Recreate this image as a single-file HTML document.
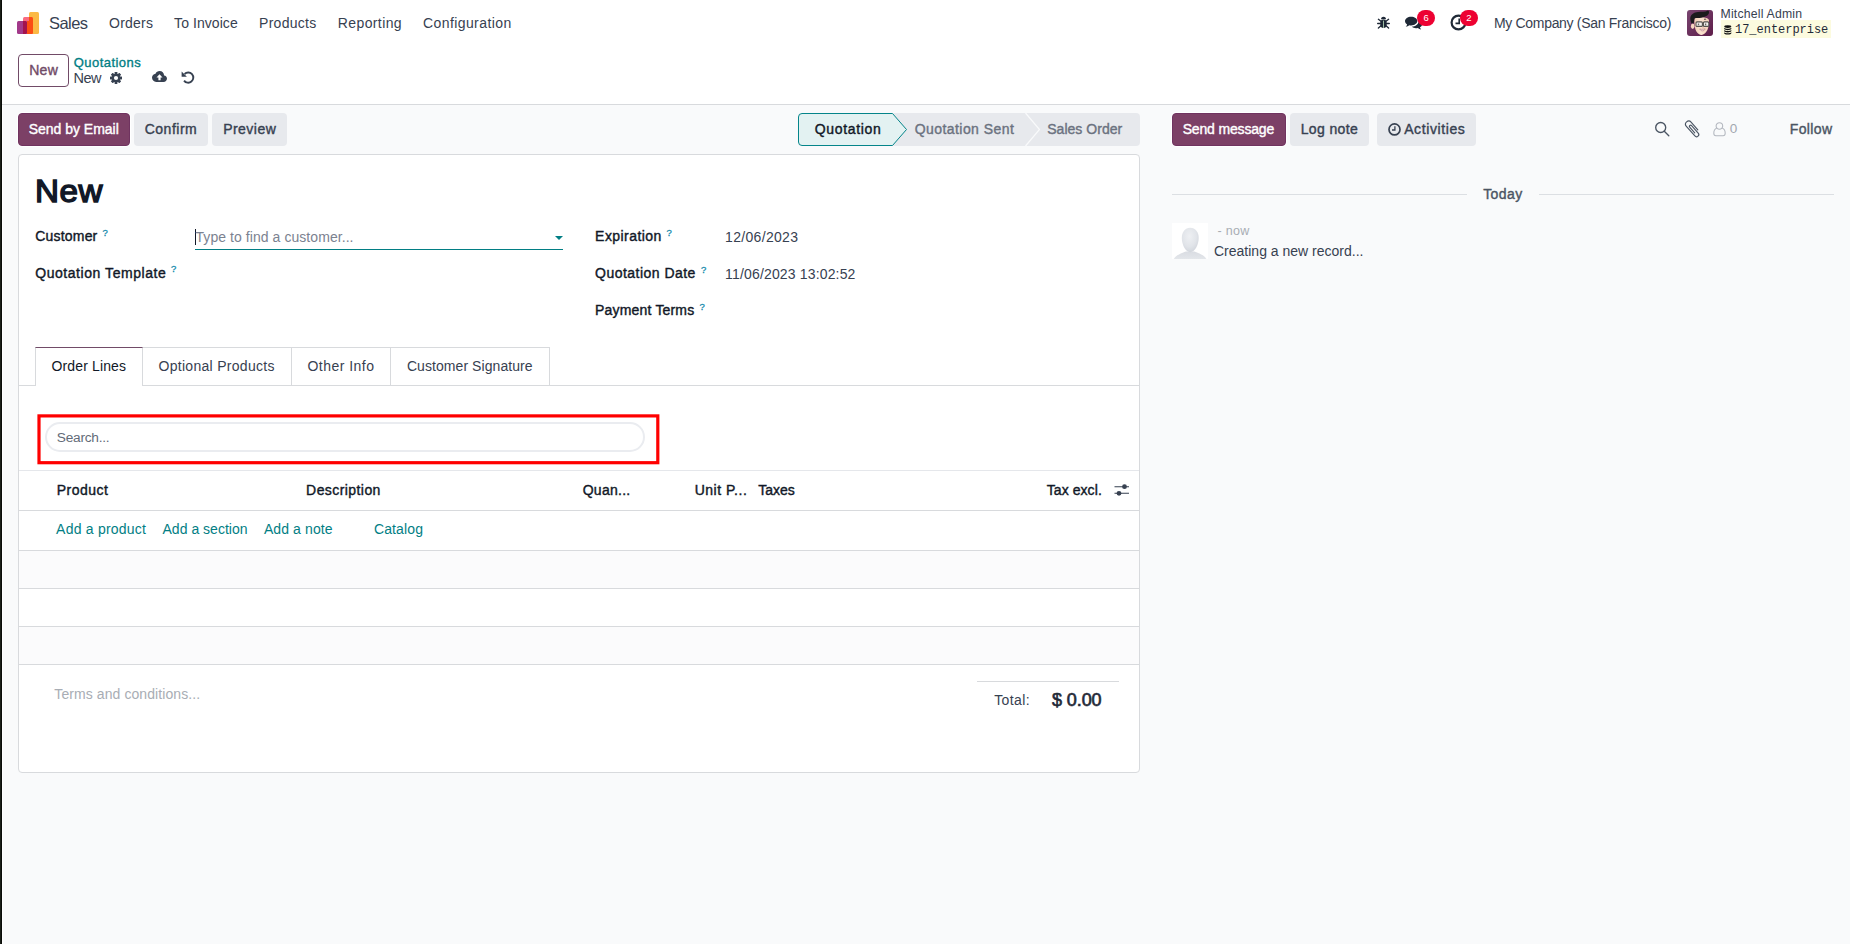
<!DOCTYPE html>
<html lang="en">
<head>
<meta charset="utf-8">
<title>Odoo - New Quotation</title>
<style>
html,body{margin:0;padding:0;}
body{width:1850px;height:944px;position:relative;overflow:hidden;background:#f9fafb;font-family:"Liberation Sans",sans-serif;font-size:14px;color:#374151;}
.a{position:absolute;}
.t{position:absolute;white-space:nowrap;line-height:20px;height:20px;}
svg{position:absolute;overflow:visible;}
.btn{position:absolute;border-radius:4px;box-sizing:border-box;}
.sec{background:#e7e9ed;}
.pri{background:#7c4066;border:1px solid #703360;box-shadow:0 0 0 1px rgba(255,255,255,.9);}
.hl{position:absolute;height:1px;background:#d8dadd;}
.vl{position:absolute;width:1px;background:#d8dadd;}
</style>
</head>
<body>

<!-- window edge -->
<div class="a" style="left:0;top:0;width:1px;height:944px;background:#1b1f18"></div>
<div class="a" style="left:1px;top:0;width:1px;height:944px;background:#0a0c08"></div>
<div class="a" style="left:2px;top:105px;width:1px;height:839px;background:#fff"></div>
<!-- top white area: navbar + control panel -->
<div class="a" style="left:2px;top:0;width:1848px;height:104px;background:#fff"></div>
<div class="hl" style="left:2px;top:104px;width:1848px;background:#d8dadd"></div>

<!-- app logo -->
<svg style="left:17px;top:12px" width="22" height="22" viewBox="0 0 22 22">
  <rect x="12" y="0" width="10" height="22" rx="1.5" fill="#fbb945"/>
  <rect x="6" y="5" width="10" height="17" rx="1.5" fill="#f96b7f"/>
  <path d="M12 5h2.5a1.5 1.5 0 0 1 1.5 1.5v14a1.5 1.5 0 0 1-1.5 1.5H12z" fill="#fb4d14"/>
  <rect x="0" y="9" width="10" height="13" rx="1.5" fill="#a2398a"/>
  <path d="M6 9h2.5a1.5 1.5 0 0 1 1.5 1.5v10a1.5 1.5 0 0 1-1.5 1.5H6z" fill="#a3134e"/>
  <rect x="10" y="9" width="2" height="13" fill="#fb4d14"/>
</svg>

<!-- systray: bug -->
<svg style="left:1377px;top:16px" width="13" height="13" viewBox="0 0 13 13" fill="none" stroke="#1f2937" stroke-width="1.35" stroke-linecap="round">
  <ellipse cx="6.5" cy="7.7" rx="3.3" ry="4.3" fill="#1f2937" stroke="none"/>
  <path d="M4 3.300a2.500 2.500 0 0 1 5 0z" fill="#1f2937" stroke="none"/>
  <path d="M0.700 7.500h3M9.300 7.500h3M1.400 3.300l2.600 2M11.600 3.300l-2.600 2M1.400 12l2.600-2.200M11.600 12l-2.600-2.200"/>
  <path d="M6.500 5v6.500" stroke="#bfe3c0" stroke-width="0.800"/>
</svg>
<!-- systray: comments -->
<svg style="left:1404.800px;top:16.200px" width="17.400" height="14.200" viewBox="0 0 17 12.500">
  <path d="M6 0C2.7 0 0 1.9 0 4.3c0 1.3.8 2.5 2.1 3.3-.2.8-.7 1.500-1.400 2.100 1.300-.1 2.600-.6 3.500-1.400.6.1 1.200.2 1.800.2 3.300 0 6-1.900 6-4.300S9.300 0 6 0z" fill="#1f2937"/>
  <path d="M13.200 4.800c0 2.700-2.900 4.900-6.600 5.100 1 .9 2.500 1.400 4.100 1.400.6 0 1.200-.1 1.800-.2.900.8 2.100 1.300 3.500 1.400-.7-.6-1.200-1.300-1.400-2.100 1.400-.8 2.200-2 2.200-3.300 0-1.700-1.500-3.200-3.700-3.900.1.500.1 1.100.1 1.600z" fill="#1f2937"/>
</svg>
<div class="a" style="left:1417px;top:10px;width:18px;height:16px;border-radius:9px;background:#ed0232"></div>
<!-- systray: clock -->
<svg style="left:1450px;top:14px" width="17" height="17" viewBox="0 0 17 17" fill="none" stroke="#1f2937">
  <circle cx="8.500" cy="8.500" r="6.900" stroke-width="2.200"/>
  <path d="M9.200 4.500v4.900H5.500" stroke-width="1.600"/>
</svg>
<div class="a" style="left:1460px;top:10px;width:18px;height:16px;border-radius:9px;background:#ed0232"></div>

<!-- user avatar -->
<svg style="left:1687px;top:10px" width="26" height="26" viewBox="0 0 26 26">
  <defs>
    <clipPath id="avc"><rect width="26" height="26" rx="3"/></clipPath>
    <linearGradient id="avbg" x1="0" y1="0" x2="1" y2="1"><stop offset="0" stop-color="#784570"/><stop offset="1" stop-color="#5e1d4a"/></linearGradient>
    <linearGradient id="avface" x1="0" y1="0" x2="1" y2="0"><stop offset="0" stop-color="#f1cdb4"/><stop offset=".45" stop-color="#fbe3d0"/><stop offset="1" stop-color="#f3cfb6"/></linearGradient>
  </defs>
  <g clip-path="url(#avc)">
    <rect width="26" height="26" fill="url(#avbg)"/>
    <ellipse cx="5.700" cy="16.200" rx="1.800" ry="2.800" fill="#f6d6c0"/>
    <path d="M7.300 9.500C7 6.500 22 6 22 10.500c.2 4.500-.8 9-3 11.800-1.600 2-3.300 2.700-4.600 2.700-1.600 0-3.600-1.200-5-3.400C7.800 19 7.400 14 7.300 9.500z" fill="url(#avface)"/>
    <path d="M4.600 13.600C3.600 11.500 3 9.300 3.400 7.300 4 4.300 7 2.300 11 2c3.500-.3 7 .3 10-1.400.7.300 1.200 1 1.100 1.800-.3 1.600-1.300 2.800-2.800 3.700-2 1.200-4.500 1.700-7 1.900-1.700.1-3.400-.1-4.700.2-.5 1.800-.6 3.600-.9 5.300-.6-.4-1.500-.3-2.100.1z" fill="#1b1b1d"/>
    <path d="M17 9.400c.7-.4 1.500-.4 2.100 0" stroke="#2a2422" stroke-width=".8" fill="none"/>
    <rect x="9" y="11.900" width="6.400" height="4.500" rx="1" fill="#f2efec" stroke="#55534f" stroke-width="1.100"/>
    <rect x="16.400" y="11.900" width="5.400" height="4.500" rx="1" fill="#f2efec" stroke="#55534f" stroke-width="1.100"/>
    <path d="M11.500 13.500v1.800M18.600 13.500v1.800" stroke="#6b6763" stroke-width="1.300"/>
    <path d="M15.200 17.700c.5.300 1.100.3 1.600 0" stroke="#eaa79a" stroke-width=".8" fill="none"/>
    <path d="M12.800 18.900c1.600.6 3.700.6 5.300-.1-.3 1.300-1.300 2-2.600 2-1.400 0-2.300-.7-2.700-1.900z" fill="#fff" stroke="#a8626a" stroke-width=".6"/>
  </g>
</svg>
<!-- db name bg -->
<div class="a" style="left:1721px;top:20px;width:110px;height:18px;background:#fcfbdf"></div>
<svg style="left:1723.500px;top:24.500px" width="7.500" height="9.500" viewBox="0 0 8 10" fill="#111">
  <ellipse cx="4" cy="1.600" rx="3.800" ry="1.500"/>
  <path d="M.2 2.800c.6.800 2 1.200 3.800 1.200s3.200-.4 3.800-1.200v1.500c-.6.800-2 1.200-3.800 1.200S.8 5.100.2 4.300z"/>
  <path d="M.2 5.200c.6.800 2 1.200 3.800 1.200s3.200-.4 3.800-1.200v1.500c-.6.800-2 1.200-3.800 1.200S.8 7.500.2 6.700z"/>
  <path d="M.2 7.600c.6.800 2 1.200 3.800 1.200s3.200-.4 3.800-1.200v1c0 .8-1.700 1.400-3.800 1.400S.2 9.400.2 8.600z"/>
</svg>

<!-- control panel -->
<div class="btn" style="left:18px;top:54px;width:51px;height:33px;border:1px solid #714b67;background:#fff"></div>
<!-- gear -->
<svg style="left:110px;top:72px" width="12" height="12" viewBox="0 0 12 12">
  <g fill="#374151">
    <circle cx="6" cy="6" r="4.350"/>
    <rect x="4.600" y="0" width="2.800" height="12" rx=".4"/><rect x="4.600" y="0" width="2.800" height="12" rx=".4" transform="rotate(45 6 6)"/><rect x="4.600" y="0" width="2.800" height="12" rx=".4" transform="rotate(90 6 6)"/><rect x="4.600" y="0" width="2.800" height="12" rx=".4" transform="rotate(135 6 6)"/>
  </g>
  <circle cx="6" cy="6" r="2.100" fill="#fff"/>
</svg>
<!-- cloud upload -->
<svg style="left:152px;top:71px" width="15" height="11" viewBox="0 0 15 11">
  <path d="M12.100 4.500C12.100 2 10.100 0 7.600 0 5.800 0 4.200 1.100 3.500 2.700 1.500 2.900 0 4.600 0 6.600 0 9 1.800 11 4.200 11h7.300c1.900 0 3.500-1.500 3.500-3.400 0-1.600-1.200-2.900-2.900-3.100z" fill="#374151"/>
  <path d="M7.500 3.200l3 3.300H8.600v2.700H6.400V6.500H4.500z" fill="#fff"/>
</svg>
<!-- undo -->
<svg style="left:181px;top:70.500px" width="14" height="13" viewBox="0 0 14 13" fill="none">
  <path d="M3.600 3A5.100 5.100 0 1 1 3.070 9.600" stroke="#374151" stroke-width="1.900" stroke-linecap="butt"/>
  <path d="M.6 .5V5.800H5.900z" fill="#374151"/>
</svg>

<!-- action buttons -->
<div class="btn pri" style="left:18px;top:113px;width:112px;height:33px"></div>
<div class="btn sec" style="left:134px;top:113px;width:74px;height:33px"></div>
<div class="btn sec" style="left:212px;top:113px;width:75px;height:33px"></div>

<!-- status bar -->
<svg style="left:798px;top:113px" width="342" height="33" viewBox="0 0 342 33">
  <path d="M4 0H338a4 4 0 0 1 4 4V29a4 4 0 0 1-4 4H4z" fill="#e7e9ed"/>
  <path d="M4 .5H94.500L108.500 16.500 94.500 32.500H4A3.500 3.500 0 0 1 .5 29V4A3.500 3.500 0 0 1 4 .5z" fill="#e3f2f2" stroke="#04858a" stroke-width="1"/>
  <path d="M227.500 0L241.500 16.500 227.500 33" fill="none" stroke="#f9fafb" stroke-width="1.200"/>
</svg>

<!-- chatter buttons -->
<div class="btn pri" style="left:1172px;top:113px;width:114px;height:33px"></div>
<div class="btn sec" style="left:1290px;top:113px;width:79px;height:33px"></div>
<div class="btn sec" style="left:1377px;top:113px;width:99px;height:33px"></div>
<svg style="left:1387.800px;top:122.500px" width="13" height="13" viewBox="0 0 13 13" fill="none" stroke="#374151">
  <circle cx="6.500" cy="6.400" r="5.500" stroke-width="1.700"/><path d="M6.900 3.200v3.800H4" stroke-width="1.300"/>
</svg>
<!-- search icon -->
<svg style="left:1654px;top:121px" width="16" height="16" viewBox="0 0 16 16" fill="none" stroke="#4b5563" stroke-width="1.350">
  <circle cx="6.700" cy="6.500" r="5"/><path d="M10.300 10.200L14.800 14.700" stroke-linecap="round"/>
</svg>
<!-- paperclip -->
<svg style="left:1684px;top:120px" width="17" height="17" viewBox="0 0 17 17" fill="none" stroke="#4b5563" stroke-width="1.150" stroke-linecap="round" stroke-linejoin="round">
  <g transform="translate(3.300 2.400) rotate(48.500)">
    <path d="M12.500 -3L2.300 -3A3.150 3.150 0 0 0 2.300 3.300L15.200 3.300A2.200 2.200 0 0 0 15.200 -1.100L5.200 -1.100A1.250 1.250 0 0 0 5.200 1.400L12.800 1.400"/>
  </g>
</svg>
<!-- user-o -->
<svg style="left:1713px;top:121.500px" width="13" height="15" viewBox="0 0 13 15" fill="none" stroke="#b3b7bf" stroke-width="1.050">
  <circle cx="6.400" cy="4" r="3.300"/>
  <path d="M3.700 6.300C1.700 7 .8 8.800 .8 11.300c0 1.500.8 2.500 2.100 2.500h7.200c1.300 0 2.100-1 2.100-2.500 0-2.500-.9-4.300-2.900-5"/>
</svg>
<!-- Today separator -->
<div class="hl" style="left:1172px;top:194px;width:295px;background:#dcdfe3"></div>
<div class="hl" style="left:1539px;top:194px;width:295px;background:#dcdfe3"></div>
<!-- message avatar -->
<svg style="left:1172px;top:223px" width="36" height="36" viewBox="0 0 36 36">
  <defs>
    <radialGradient id="sil" cx=".45" cy=".35" r=".7"><stop offset="0" stop-color="#eef0f3"/><stop offset=".6" stop-color="#e1e4e9"/><stop offset="1" stop-color="#cfd3da"/></radialGradient>
    <linearGradient id="sil2" x1="0" y1="0" x2="0" y2="1"><stop offset="0" stop-color="#d9dce2"/><stop offset="1" stop-color="#e3e6ea"/></linearGradient>
    <clipPath id="mvc"><rect width="36" height="36"/></clipPath>
  </defs>
  <rect width="36" height="36" fill="#fff"/>
  <g clip-path="url(#mvc)">
  <path d="M1.800 36c2-3.500 7-6 12-7.600h8.600c5 1.600 10 4.100 12 7.600z" fill="url(#sil2)"/>
  <path d="M18.200 4.800c5.200 0 8.500 4.400 8.500 10.200 0 6.800-4 14.200-8.500 14.200S9.800 21.800 9.800 15c0-5.800 3.200-10.200 8.400-10.200z" fill="url(#sil)"/>
  </g>
</svg>

<!-- form sheet -->
<div class="a" style="left:18px;top:154px;width:1122px;height:619px;box-sizing:border-box;background:#fff;border:1px solid #d8dadd;border-radius:4px"></div>
<!-- customer input underline + caret -->
<div class="a" style="left:195px;top:248.800px;width:368px;height:1.100px;background:#017e84"></div>
<div class="a" style="left:195px;top:229px;width:1px;height:16px;background:#111827"></div>
<svg style="left:555px;top:236px" width="8" height="4" viewBox="0 0 8 4"><path d="M0 0h8L4 4z" fill="#017e84"/></svg>

<!-- notebook tabs -->
<div class="hl" style="left:19px;top:385px;width:1120px"></div>
<div class="a" style="left:35px;top:347px;width:108px;height:39px;box-sizing:border-box;background:#fff;border:1px solid #d8dadd;border-bottom:none;border-top:1px solid #714b67"></div>
<div class="hl" style="left:143px;top:347px;width:407px"></div>
<div class="vl" style="left:291px;top:347px;height:38px"></div>
<div class="vl" style="left:390px;top:347px;height:38px"></div>
<div class="vl" style="left:549px;top:347px;height:38px"></div>

<!-- red highlight + search -->
<svg style="left:0;top:0" width="700" height="470" viewBox="0 0 700 470"><rect x="39" y="415.900" width="618.800" height="46.800" fill="none" stroke="#ff0000" stroke-width="3.200"/></svg>
<div class="a" style="left:45px;top:422px;width:600px;height:30px;box-sizing:border-box;border:2px solid #eaecf0;border-radius:15px;background:#fff"></div>

<!-- table -->
<div class="hl" style="left:19px;top:470px;width:1120px;background:#e5e7eb"></div>
<div class="hl" style="left:19px;top:510px;width:1120px"></div>
<div class="hl" style="left:19px;top:550px;width:1120px"></div>
<div class="a" style="left:19px;top:551px;width:1120px;height:37px;background:#fbfbfc"></div>
<div class="hl" style="left:19px;top:588px;width:1120px"></div>
<div class="hl" style="left:19px;top:626px;width:1120px"></div>
<div class="a" style="left:19px;top:627px;width:1120px;height:37px;background:#fbfbfc"></div>
<div class="hl" style="left:19px;top:664px;width:1120px"></div>
<!-- sliders icon -->
<svg style="left:1114px;top:483px" width="16" height="14" viewBox="0 0 16 14">
  <path d="M.5 3.700h14.500M.5 10.300h14.500" stroke="#374151" stroke-width="1.100" fill="none"/>
  <circle cx="10.500" cy="3.700" r="2.400" fill="#374151"/><circle cx="5" cy="10.300" r="2.400" fill="#374151"/>
</svg>
<!-- total line -->
<div class="hl" style="left:977px;top:681px;width:142px"></div>

<!-- text -->
<span class="t" id="sales" style="left:49.00px;top:13.28px;font-size:16.50px;color:#374151;letter-spacing:-0.551px;">Sales</span>
<span class="t" id="m1" style="left:109.00px;top:12.65px;font-size:14.00px;color:#374151;letter-spacing:0.239px;">Orders</span>
<span class="t" id="m2" style="left:174.10px;top:12.65px;font-size:14.00px;color:#374151;letter-spacing:0.060px;">To Invoice</span>
<span class="t" id="m3" style="left:259.10px;top:12.65px;font-size:14.00px;color:#374151;letter-spacing:0.263px;">Products</span>
<span class="t" id="m4" style="left:337.80px;top:12.65px;font-size:14.00px;color:#374151;letter-spacing:0.386px;">Reporting</span>
<span class="t" id="m5" style="left:423.00px;top:12.65px;font-size:14.00px;color:#374151;letter-spacing:0.409px;">Configuration</span>
<span class="t" id="company" style="left:1493.90px;top:12.55px;font-size:14.00px;color:#374151;letter-spacing:-0.307px;">My Company (San Francisco)</span>
<span class="t" id="uname" style="left:1720.50px;top:3.75px;font-size:12.25px;color:#374151;letter-spacing:0.203px;">Mitchell Admin</span>
<span class="t" id="db" style="left:1735.00px;top:20.30px;font-size:12.00px;color:#1f2937;font-family:'Liberation Mono', monospace;letter-spacing:-0.025px;">17_enterprise</span>
<span class="t" id="b6" style="left:1423.50px;top:8.01px;font-size:9.50px;color:#fff;">6</span>
<span class="t" id="b2" style="left:1466.30px;top:8.01px;font-size:9.50px;color:#fff;">2</span>
<span class="t" id="newbtn" style="left:29.20px;top:60.15px;font-size:14.00px;color:#714b67;-webkit-text-stroke:0.39px currentColor;letter-spacing:0.291px;">New</span>
<span class="t" id="bc1" style="left:73.68px;top:53.09px;font-size:13.00px;color:#017e84;-webkit-text-stroke:0.36px currentColor;letter-spacing:0.468px;">Quotations</span>
<span class="t" id="bc2" style="left:73.50px;top:67.97px;font-size:14.50px;color:#374151;letter-spacing:-0.504px;">New</span>
<span class="t" id="sbe" style="left:28.70px;top:119.15px;font-size:14.00px;color:#fff;-webkit-text-stroke:0.39px currentColor;letter-spacing:-0.015px;">Send by Email</span>
<span class="t" id="conf" style="left:144.70px;top:119.15px;font-size:14.00px;color:#374151;-webkit-text-stroke:0.39px currentColor;letter-spacing:0.514px;">Confirm</span>
<span class="t" id="prev" style="left:223.20px;top:119.15px;font-size:14.00px;color:#374151;-webkit-text-stroke:0.39px currentColor;letter-spacing:0.467px;">Preview</span>
<span class="t" id="st1" style="left:814.70px;top:119.15px;font-size:14.00px;color:#111827;-webkit-text-stroke:0.39px currentColor;letter-spacing:0.672px;">Quotation</span>
<span class="t" id="st2" style="left:914.70px;top:119.15px;font-size:14.00px;color:#6b7280;-webkit-text-stroke:0.39px currentColor;letter-spacing:0.438px;">Quotation Sent</span>
<span class="t" id="st3" style="left:1047.20px;top:119.15px;font-size:14.00px;color:#6b7280;-webkit-text-stroke:0.39px currentColor;letter-spacing:0.039px;">Sales Order</span>
<span class="t" id="sm" style="left:1182.70px;top:119.15px;font-size:14.00px;color:#fff;-webkit-text-stroke:0.39px currentColor;letter-spacing:-0.164px;">Send message</span>
<span class="t" id="ln" style="left:1300.70px;top:119.15px;font-size:14.00px;color:#374151;-webkit-text-stroke:0.39px currentColor;letter-spacing:0.371px;">Log note</span>
<span class="t" id="act" style="left:1404.20px;top:119.15px;font-size:14.00px;color:#374151;-webkit-text-stroke:0.39px currentColor;letter-spacing:0.596px;">Activities</span>
<span class="t" id="fol0" style="left:1729.80px;top:119.02px;font-size:13.50px;color:#a3a7b0;">0</span>
<span class="t" id="follow" style="left:1789.70px;top:119.15px;font-size:14.00px;color:#4b5563;-webkit-text-stroke:0.39px currentColor;letter-spacing:0.406px;">Follow</span>
<span class="t" id="today" style="left:1483.20px;top:184.15px;font-size:14.00px;color:#4b5563;-webkit-text-stroke:0.39px currentColor;letter-spacing:0.435px;">Today</span>
<span class="t" id="now" style="left:1217.50px;top:220.67px;font-size:12.50px;color:#a8adb4;letter-spacing:0.315px;">- now</span>
<span class="t" id="creating" style="left:1214.00px;top:240.75px;font-size:14.00px;color:#374151;letter-spacing:0.004px;">Creating a new record...</span>
<span class="t" id="title" style="left:34.80px;top:181.85px;font-size:31.00px;color:#111827;-webkit-text-stroke:1.40px currentColor;letter-spacing:0.566px;transform-origin:0 50%;transform:scaleX(1.07);">New</span>
<span class="t" id="l1" style="left:35.20px;top:226.15px;font-size:14.00px;color:#111827;-webkit-text-stroke:0.39px currentColor;letter-spacing:0.201px;">Customer</span>
<span class="t" id="q1" style="left:102.43px;top:222.81px;font-size:9.50px;color:#1289ab;-webkit-text-stroke:0.27px currentColor;">?</span>
<span class="t" id="ph" style="left:195.50px;top:226.75px;font-size:14.00px;color:#7b8290;letter-spacing:0.063px;">Type to find a customer...</span>
<span class="t" id="l2" style="left:35.20px;top:262.75px;font-size:14.00px;color:#111827;-webkit-text-stroke:0.39px currentColor;letter-spacing:0.555px;">Quotation Template</span>
<span class="t" id="q2" style="left:170.93px;top:259.41px;font-size:9.50px;color:#1289ab;-webkit-text-stroke:0.27px currentColor;">?</span>
<span class="t" id="l3" style="left:595.10px;top:226.15px;font-size:14.00px;color:#111827;-webkit-text-stroke:0.39px currentColor;letter-spacing:0.448px;">Expiration</span>
<span class="t" id="q3" style="left:666.43px;top:222.81px;font-size:9.50px;color:#1289ab;-webkit-text-stroke:0.27px currentColor;">?</span>
<span class="t" id="v3" style="left:725.10px;top:226.75px;font-size:14.00px;color:#374151;letter-spacing:0.312px;">12/06/2023</span>
<span class="t" id="l4" style="left:595.10px;top:263.15px;font-size:14.00px;color:#111827;-webkit-text-stroke:0.39px currentColor;letter-spacing:0.471px;">Quotation Date</span>
<span class="t" id="q4" style="left:700.93px;top:259.81px;font-size:9.50px;color:#1289ab;-webkit-text-stroke:0.27px currentColor;">?</span>
<span class="t" id="v4" style="left:725.10px;top:263.75px;font-size:14.00px;color:#374151;letter-spacing:0.159px;">11/06/2023 13:02:52</span>
<span class="t" id="l5" style="left:595.10px;top:300.15px;font-size:14.00px;color:#111827;-webkit-text-stroke:0.39px currentColor;letter-spacing:0.175px;">Payment Terms</span>
<span class="t" id="q5" style="left:699.43px;top:296.81px;font-size:9.50px;color:#1289ab;-webkit-text-stroke:0.27px currentColor;">?</span>
<span class="t" id="tab1" style="left:51.50px;top:356.15px;font-size:14.00px;color:#111827;letter-spacing:0.133px;">Order Lines</span>
<span class="t" id="tab2" style="left:158.50px;top:356.15px;font-size:14.00px;color:#374151;letter-spacing:0.293px;">Optional Products</span>
<span class="t" id="tab3" style="left:307.50px;top:356.15px;font-size:14.00px;color:#374151;letter-spacing:0.469px;">Other Info</span>
<span class="t" id="tab4" style="left:406.90px;top:356.15px;font-size:14.00px;color:#374151;letter-spacing:0.069px;">Customer Signature</span>
<span class="t" id="search" style="left:56.80px;top:427.55px;font-size:13.70px;color:#636b78;letter-spacing:-0.250px;">Search...</span>
<span class="t" id="h1" style="left:56.70px;top:480.15px;font-size:14.00px;color:#111827;-webkit-text-stroke:0.39px currentColor;letter-spacing:0.475px;">Product</span>
<span class="t" id="h2" style="left:306.10px;top:480.15px;font-size:14.00px;color:#111827;-webkit-text-stroke:0.39px currentColor;letter-spacing:0.427px;">Description</span>
<span class="t" id="h3" style="left:582.70px;top:480.15px;font-size:14.00px;color:#111827;-webkit-text-stroke:0.39px currentColor;letter-spacing:0.263px;">Quan...</span>
<span class="t" id="h4" style="left:694.70px;top:480.15px;font-size:14.00px;color:#111827;-webkit-text-stroke:0.39px currentColor;letter-spacing:0.512px;">Unit P...</span>
<span class="t" id="h5" style="left:758.30px;top:480.15px;font-size:14.00px;color:#111827;-webkit-text-stroke:0.39px currentColor;letter-spacing:-0.020px;">Taxes</span>
<span class="t" id="h6" style="left:1046.70px;top:480.15px;font-size:14.00px;color:#111827;-webkit-text-stroke:0.39px currentColor;letter-spacing:0.079px;">Tax excl.</span>
<span class="t" id="a1" style="left:56.10px;top:519.15px;font-size:14.00px;color:#017e84;letter-spacing:0.227px;">Add a product</span>
<span class="t" id="a2" style="left:162.50px;top:519.15px;font-size:14.00px;color:#017e84;letter-spacing:0.021px;">Add a section</span>
<span class="t" id="a3" style="left:263.90px;top:519.15px;font-size:14.00px;color:#017e84;letter-spacing:0.106px;">Add a note</span>
<span class="t" id="a4" style="left:373.90px;top:519.15px;font-size:14.00px;color:#017e84;letter-spacing:0.137px;">Catalog</span>
<span class="t" id="terms" style="left:54.30px;top:684.15px;font-size:14.00px;color:#a8adb4;letter-spacing:0.087px;">Terms and conditions...</span>
<span class="t" id="total" style="left:994.20px;top:689.85px;font-size:14.00px;color:#374151;letter-spacing:0.384px;">Total:</span>
<span class="t" id="amount" style="left:1052.02px;top:690.16px;font-size:18.00px;color:#1f2937;-webkit-text-stroke:0.65px currentColor;letter-spacing:-0.093px;">$ 0.00</span>
</body>
</html>
